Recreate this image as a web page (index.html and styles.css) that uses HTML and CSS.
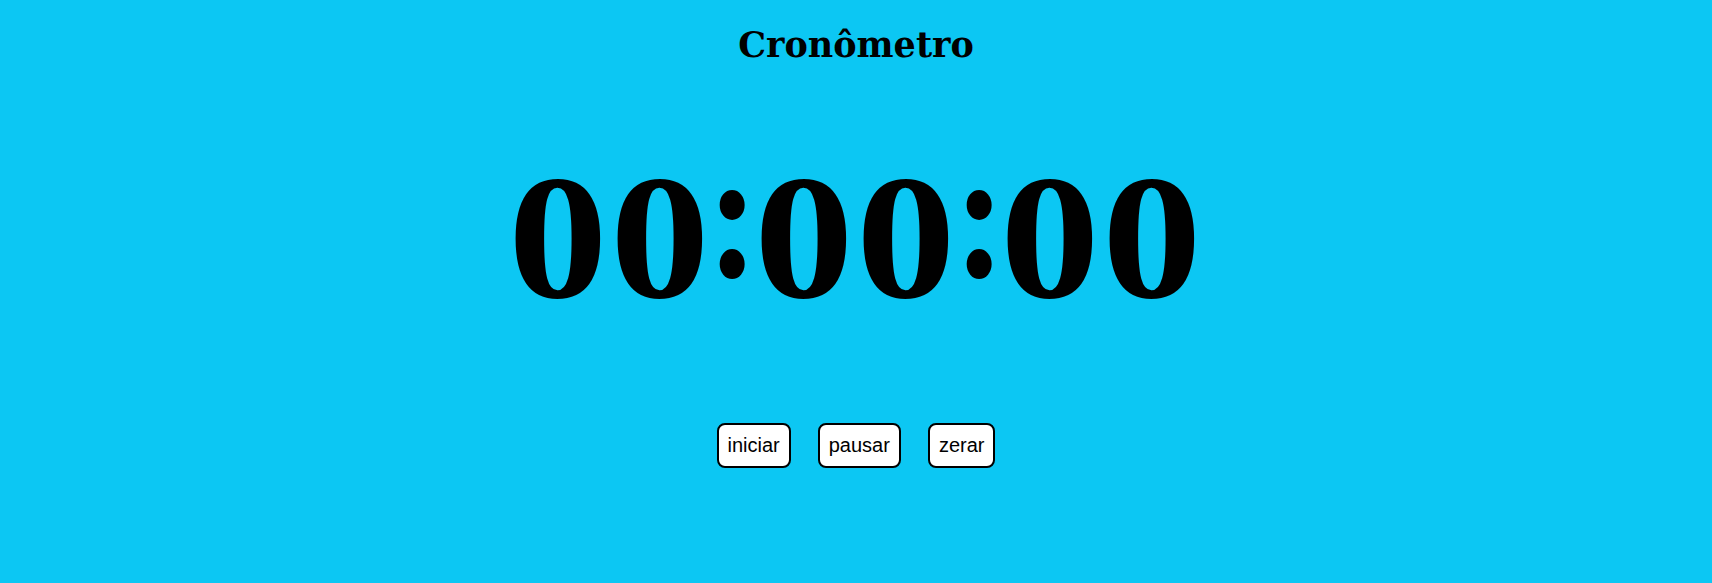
FILE: index.html
```html
<!DOCTYPE html>
<html lang="pt-BR">
<head>
<meta charset="utf-8">
<title>Cronômetro</title>
<link rel="stylesheet" href="styles.css">
</head>
<body>
<main class="app">
  <h1 class="title">Cronômetro</h1>
  <div class="clock"><span class="pair">00</span><span class="sep">:</span><span class="pair">00</span><span class="sep">:</span><span class="pair">00</span></div>
  <div class="controls">
    <button class="btn">iniciar</button>
    <button class="btn">pausar</button>
    <button class="btn">zerar</button>
  </div>
</main>
</body>
</html>
```
FILE: styles.css
```css
html, body {
  margin: 0;
  padding: 0;
  background: #0cc7f3;
  height: 100%;
}
.app {
  display: flex;
  flex-direction: column;
  align-items: center;
}
.title {
  font-family: "DejaVu Serif", serif;
  font-weight: bold;
  font-size: 35px;
  line-height: 42px;
  margin: 24px 0 0;
  color: #000;
}
.clock {
  display: flex;
  align-items: baseline;
  justify-content: center;
  margin-top: 67px;
  font-family: "Liberation Serif", "Times New Roman", serif;
  font-weight: bold;
  color: #000;
  white-space: nowrap;
}
.pair {
  display: inline-block;
  font-size: 178px;
  line-height: 204px;
  letter-spacing: 2px;
  transform: scaleX(1.12);
}
.sep {
  display: inline-block;
  font-size: 184px;
  line-height: 204px;
  margin: 0 1.5px;
  transform: translateY(-21px) scaleX(0.84);
}
.controls {
  display: flex;
  gap: 27px;
  margin-top: 84px;
}
.btn {
  font-family: "Liberation Sans", Arial, sans-serif;
  font-size: 20px;
  line-height: 23px;
  padding: 9px 9px;
  background: #fff;
  color: #000;
  border: 2px solid #000;
  border-radius: 8px;
}
```
